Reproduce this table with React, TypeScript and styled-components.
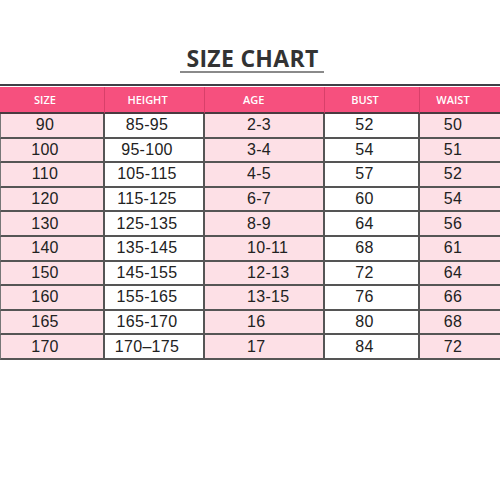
import React from 'react';
import styled, { createGlobalStyle } from 'styled-components';

const GlobalStyle = createGlobalStyle`
  html, body {
    margin: 0;
    padding: 0;
    background: #ffffff;
  }
`;

const columns = [
  { title: 'SIZE', pink: true },
  { title: 'HEIGHT', pink: false },
  { title: 'AGE', pink: true },
  { title: 'BUST', pink: false },
  { title: 'WAIST', pink: true },
];

const rows = [
  ['90', '85-95', '2-3', '52', '50'],
  ['100', '95-100', '3-4', '54', '51'],
  ['110', '105-115', '4-5', '57', '52'],
  ['120', '115-125', '6-7', '60', '54'],
  ['130', '125-135', '8-9', '64', '56'],
  ['140', '135-145', '10-11', '68', '61'],
  ['150', '145-155', '12-13', '72', '64'],
  ['160', '155-165', '13-15', '76', '66'],
  ['165', '165-170', '16', '80', '68'],
  ['170', '170–175', '17', '84', '72'],
];

const App: React.FC = () => {
  return (
    <Page>
      <GlobalStyle />
      <TitleWrap>
        <Title>SIZE CHART</Title>
      </TitleWrap>
      <Table>
        {columns.map((c, i) => (
          <HeadCell key={c.title} last={i === columns.length - 1}>
            <Label left={i === 2} indent={38}>{c.title}</Label>
          </HeadCell>
        ))}
        {rows.map((r, ri) =>
          r.map((v, ci) => (
            <Cell
              key={`${ri}-${ci}`}
              pink={columns[ci].pink}
              first={ci === 0}
              last={ci === columns.length - 1}
            >
              <Label left={ci === 2} indent={42}>{v}</Label>
            </Cell>
          )),
        )}
      </Table>
    </Page>
  );
};

export default App;

const Page = styled.div`
  width: 500px;
  height: 500px;
  padding-top: 45px;
  box-sizing: border-box;
  background: #fff;
`;

const TitleWrap = styled.div`
  display: flex;
  justify-content: center;
  padding-left: 4px;
`;

const Title = styled.div`
  font-family: 'Open Sans', 'Liberation Sans', sans-serif;
  font-weight: 700;
  font-size: 23px;
  line-height: 26px;
  color: #333333;
  letter-spacing: 0.3px;
  padding: 0 5px 0 6px;
  border-bottom: 2px solid #8a8a8a;
`;

const Table = styled.div`
  margin-top: 11px;
  display: grid;
  grid-template-columns: 105px 100px 120px 95px 80px;
  grid-template-rows: 27px repeat(10, 24.6px);
  border-top: 2px solid #3f3f46;
  padding-top: 1px;
`;

const HeadCell = styled.div<{ last?: boolean }>`
  display: flex;
  align-items: center;
  background: #f6507e;
  border-right: ${(p) => (p.last ? 'none' : '1px solid #d8406a')};
  border-bottom: 2px solid #4a3a40;
  font-family: 'Open Sans', 'Liberation Sans', sans-serif;
  font-weight: 600;
  font-size: 11px;
  color: #ffffff;
`;

const Cell = styled.div<{ pink: boolean; first?: boolean; last?: boolean }>`
  display: flex;
  align-items: center;
  background: ${(p) => (p.pink ? '#fde0e6' : '#ffffff')};
  border-right: ${(p) => (p.last ? 'none' : '2px solid #555555')};
  border-left: ${(p) => (p.first ? '1px solid #777' : 'none')};
  border-bottom: 2px solid #555555;
  font-family: 'Liberation Sans', Arial, sans-serif;
  font-size: 16px;
  letter-spacing: 0.3px;
  color: #222222;
`;

const Label = styled.span<{ left?: boolean; indent: number }>`
  flex: 1;
  text-align: ${(p) => (p.left ? 'left' : 'center')};
  padding-left: ${(p) => (p.left ? `${p.indent}px` : '0')};
  padding-right: ${(p) => (p.left ? '0' : '14px')};
`;
